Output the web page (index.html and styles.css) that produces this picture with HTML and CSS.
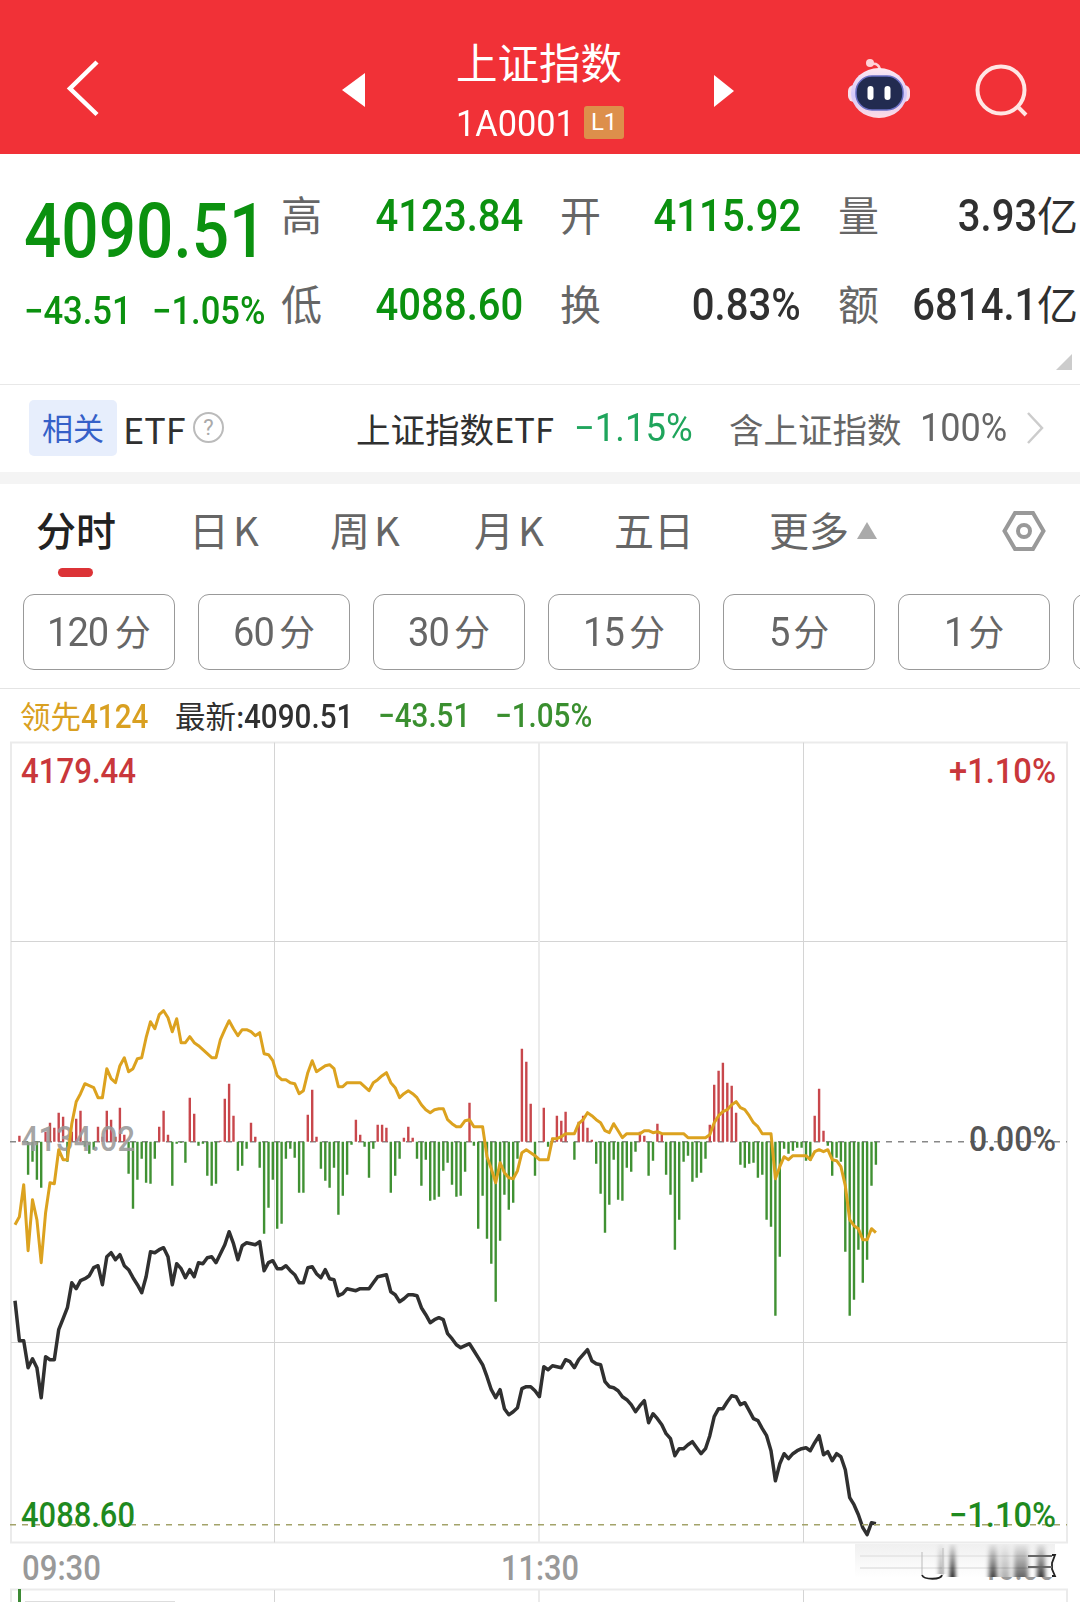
FILE: index.html
```html
<!DOCTYPE html>
<html lang="zh-CN">
<head>
    <meta charset="UTF-8">
    <meta name="viewport" content="width=device-width, initial-scale=1.0">
    <title>上证指数 1A0001</title>
    <link rel="stylesheet" href="styles.css">
</head>
<body>
    <div id="app">
        <header class="topbar">
            <svg class="back" width="34" height="60" viewBox="0 0 34 60"><path d="M31 3 4 29.500l27 26" /></svg>
            <svg class="prev" width="24" height="34" viewBox="0 0 24 34"><path d="M23 0v34L0 17z" /></svg>
            <div class="title">
                <h1>上证指数</h1>
                <p><span class="num code">1A0001</span><span class="level">L1</span></p>
            </div>
            <svg class="next" width="22" height="32" viewBox="0 0 22 32"><path d="M1 0v32l20-16z" /></svg>
            <svg class="robot" width="64" height="62" viewBox="0 0 64 62">
                <defs>
                    <linearGradient id="shell" x1="0" y1="0" x2="0" y2="1">
                        <stop offset="0" stop-color="#ffe9f0" />
                        <stop offset=".55" stop-color="#d5c8fa" />
                        <stop offset="1" stop-color="#ffdce4" />
                    </linearGradient>
                </defs>
                <path d="M33 13c0-6-4-8-8-7" fill="none" stroke="#ffd3d8" stroke-width="2.5" />
                <circle cx="23" cy="5" r="4" fill="#ffd3d8" />
                <rect x="1" y="27" width="62" height="17" rx="6" fill="#f8dfec" />
                <ellipse cx="32" cy="35" rx="28" ry="25" fill="url(#shell)" />
                <rect x="9" y="18" width="47" height="34" rx="16" fill="#222b50" stroke="#6a6fc4" stroke-width="1.5" />
                <rect x="20.500" y="28" width="6" height="14" rx="3" fill="#fff" />
                <rect x="37.500" y="28" width="6" height="14" rx="3" fill="#fff" />
            </svg>
            <svg class="search" width="56" height="56" viewBox="0 0 56 56"><circle cx="26" cy="27" r="23.500" /><path d="m42 43 9 9" /></svg>
        </header>

        <section class="quote">
            <div class="price">
                <div class="num last">4090.51</div>
                <div class="change"><span class="num">−43.51</span><span class="num">−1.05%</span></div>
            </div>
            <dl class="stats">
                <div><dt>高</dt><dd class="down"><span class="num">4123.84</span></dd></div>
                <div><dt>开</dt><dd class="down"><span class="num">4115.92</span></dd></div>
                <div><dt>量</dt><dd><span class="num">3.93</span>亿</dd></div>
                <div><dt>低</dt><dd class="down"><span class="num">4088.60</span></dd></div>
                <div><dt>换</dt><dd><span class="num">0.83%</span></dd></div>
                <div><dt>额</dt><dd><span class="num">6814.1</span>亿</dd></div>
            </dl>
            <svg class="corner" width="16" height="16" viewBox="0 0 16 16"><path d="M16 0v16H0z" /></svg>
        </section>

        <section class="etf">
            <span class="chip">相关</span>
            <span class="etf-label">ETF</span>
            <span class="help">?</span>
            <span class="etf-name">上证指数ETF</span>
            <span class="num etf-change">−1.15%</span>
            <span class="etf-hold">含上证指数</span>
            <span class="num etf-pct">100%</span>
            <svg width="18" height="32" viewBox="0 0 18 32"><path d="m2 1 14 15L2 31" /></svg>
        </section>

        <nav class="tabs">
            <span class="active">分时</span>
            <span>日<b>K</b></span>
            <span>周<b>K</b></span>
            <span>月<b>K</b></span>
            <span>五日</span>
            <span>更多<svg width="20" height="17" viewBox="0 0 20 17"><path d="M10 0l10 17H0z" /></svg></span>
            <svg class="gear" width="44" height="42" viewBox="0 0 44 42"><path d="M13 3h18l10.500 18L31 39H13L2.500 21z" /><circle cx="22" cy="21" r="6" /></svg>
        </nav>

        <div class="periods">
            <button><span class="num">120</span>分</button>
            <button><span class="num">60</span>分</button>
            <button><span class="num">30</span>分</button>
            <button><span class="num">15</span>分</button>
            <button><span class="num">5</span>分</button>
            <button><span class="num">1</span>分</button>
            <button></button>
        </div>

        <div class="legend">
            <span class="lead">领先<span class="num">4124</span></span>
            <span class="latest">最新:<span class="num">4090.51</span></span>
            <span class="num fall">−43.51</span>
            <span class="num fall">−1.05%</span>
        </div>

        <svg id="chart" width="1080" height="862" viewBox="0 0 1080 862">
            <defs>
                <linearGradient id="fade" x1="0" y1="0" x2="0" y2="1">
                    <stop offset="0" stop-color="#000" stop-opacity=".05" />
                    <stop offset="1" stop-color="#000" />
                </linearGradient>
                <linearGradient id="haze" x1="0" y1="0" x2="0" y2="1">
                    <stop offset="0" stop-color="#f0f0f0" />
                    <stop offset="1" stop-color="#fff" />
                </linearGradient>
                <filter id="soft" x="-50%" width="200%"><feGaussianBlur stdDeviation="2 0" /></filter>
            </defs>
            <g class="grid">
                <path class="frame" d="M11 2.500h1056v800H11z" />
                <path d="M274.500 2.500v800M803.500 2.500v800M11 201.500h1056M11 602.500h1056" />
                <path class="frame" d="M539 2.500v800M11 862v-12.500h1056V862M539 850v12" />
                <path d="M274.500 850v12M803.500 850v12" />
                <path class="zero" d="M10 401.700h1057" />
            </g>
            <g id="bars"></g>
            <g class="label">
                <text class="mid" x="21" y="411" textLength="114" lengthAdjust="spacingAndGlyphs">4134.02</text>
            </g>
            <path id="average" />
            <path id="price" />
            <path class="low" d="M10 784.700h1057" />
            <g class="label">
                <text class="up" x="21" y="43" textLength="115" lengthAdjust="spacingAndGlyphs">4179.44</text>
                <text class="up" x="949" y="43" textLength="107" lengthAdjust="spacingAndGlyphs">+1.10%</text>
                <text class="flat" x="969" y="411" textLength="87" lengthAdjust="spacingAndGlyphs">0.00%</text>
                <text class="down" x="21" y="787" textLength="114" lengthAdjust="spacingAndGlyphs">4088.60</text>
                <text class="down" x="949" y="787" textLength="107" lengthAdjust="spacingAndGlyphs">−1.10%</text>
                <text class="time" x="22" y="840" textLength="79" lengthAdjust="spacingAndGlyphs">09:30</text>
                <text class="time" x="501" y="840" textLength="78" lengthAdjust="spacingAndGlyphs">11:30</text>
                <text class="time" x="982" y="840" textLength="73" lengthAdjust="spacingAndGlyphs">15:00</text>
            </g>
            <g class="watermark">
                <rect x="855" y="804" width="200" height="33" fill="url(#haze)" />
                <path d="M860 816h180M860 828h180" stroke="#e8e8e8" stroke-width="2" />
                <g filter="url(#soft)" fill="url(#fade)">
                    <rect x="939" y="804" width="4" height="30" opacity=".45" />
                    <rect x="950" y="804" width="5" height="33" />
                    <rect x="989" y="804" width="8" height="33" opacity=".75" />
                    <rect x="1000" y="804" width="10" height="33" opacity=".3" />
                    <rect x="1014" y="804" width="14" height="33" opacity=".6" />
                    <rect x="1037" y="804" width="8" height="33" opacity=".8" />
                </g>
                <path d="M922 835c2 5 19 5 20 0M1052 815h3l-3 8v6l3 7h-3" fill="none" stroke="#222" stroke-width="1.8" />
                <path d="M1028 816h24M1028 827h24" stroke="#666" stroke-width="2" />
                <path d="M922 812v23M943 808v27" stroke="#bbb" />
            </g>
            <path d="M19.500 849v13" stroke="#3d8a35" stroke-width="3" />
            <path d="M25 861.500h150" stroke="#ddd" />
        </svg>
    </div>
    <script src="chart.js"></script>
</body>
</html>
```
FILE: styles.css
```css
* {
    box-sizing: border-box;
    margin: 0;
    padding: 0;
}
body {
    width: 1080px;
    height: 1602px;
    overflow: hidden;
    background: #fff;
    color: #303030;
    font-family: "Noto Sans CJK SC", sans-serif;
}
svg {
    display: block;
    flex: none;
}
/* narrow figures */
.num {
    display: inline-block;
    font-family: Roboto, "Noto Sans CJK SC", sans-serif;
    font-weight: 500;
    transform: scaleX(.9);
    transform-origin: left;
}

/* header */
.topbar {
    display: flex;
    height: 154px;
    background: #f13137;
    color: #fff;
}
.topbar svg {
    fill: #fff;
}
.topbar .back {
    margin: 59px 0 0 66px;
    fill: none;
    stroke: #fff;
    stroke-width: 4.5;
}
.prev {
    margin: 73px 0 0 242px;
}
.title {
    width: 168px;
    margin: 39px 0 0 90px;
}
.title h1 {
    font-size: 41.5px;
    font-weight: 400;
    line-height: 44px;
    white-space: nowrap;
}
.title p {
    display: flex;
    align-items: center;
    height: 33px;
    margin-top: 23px;
}
.code {
    width: 129px;
    padding-top: 2px;
    font-size: 36.5px;
    font-weight: 400;
    white-space: nowrap;
    transform: scaleX(.94);
}
.level {
    width: 40px;
    height: 33px;
    border-radius: 3px;
    background: #dd8f4b;
    font: 24px/33px Roboto, sans-serif;
    text-align: center;
}
.next {
    margin: 75px 0 0 89px;
}
.robot {
    margin: 58px 0 0 112px;
}
.topbar .search {
    margin: 63px 0 0 64px;
    fill: none;
    stroke: #ffe6e4;
    stroke-width: 4;
}

/* quote */
.quote {
    position: relative;
    display: flex;
    height: 231px;
    padding: 28px 2px 0 24px;
    border-bottom: 1px solid #e8e8e8;
}
.price {
    width: 257px;
    color: #0b910f;
}
.last {
    width: 257px;
    padding-top: 9px;
    font-size: 76px;
    line-height: 80px;
    white-space: nowrap;
    transform: scaleX(.865);
}
.change {
    display: flex;
    margin-top: 16px;
    font-size: 38px;
    line-height: 48px;
    white-space: nowrap;
}
.change .num {
    width: 128px;
    transform: scaleX(.91);
}
.stats {
    display: grid;
    grid-template-columns: 242px 241px 240px;
    grid-auto-rows: 89px;
    column-gap: 37px;
}
.stats div {
    display: flex;
    justify-content: space-between;
    height: 62px;
    line-height: 62px;
}
.stats dt {
    color: #666;
    font-size: 41px;
}
.stats dd {
    font-size: 41px;
}
.stats .num {
    padding-top: 4px;
    font-size: 44px;
    line-height: 58px;
    transform: scaleX(.91);
    transform-origin: right;
}
.down {
    color: #0b910f;
}
.corner {
    position: absolute;
    right: 8px;
    bottom: 14px;
    fill: #ccc;
}

/* related etf */
.etf {
    display: flex;
    align-items: center;
    height: 99px;
    padding: 0 36px 2px 29px;
    border-bottom: 12px solid #f4f4f4;
    font-size: 34.5px;
    white-space: nowrap;
}
.chip {
    width: 88px;
    height: 56px;
    border-radius: 5px;
    background: #e7eefc;
    color: #3560c8;
    font-size: 31px;
    line-height: 54px;
    text-align: center;
}
.etf-label {
    width: 69px;
    padding-left: 6px;
    font-size: 36px;
}
.help {
    width: 31px;
    height: 31px;
    margin-left: 7px;
    border: 2px solid #bbb;
    border-radius: 50%;
    color: #aaa;
    font: 22px/27px Roboto, sans-serif;
    text-align: center;
}
.etf-name {
    width: 218px;
    margin-left: 132px;
}
.etf-change {
    width: 155px;
    color: #1fa55c;
    font-size: 38px;
    font-weight: 400;
    transform: scaleX(.96);
}
.etf-hold {
    width: 191px;
    color: #666;
}
.etf-pct {
    width: 106px;
    color: #666;
    font-size: 38px;
    font-weight: 400;
    transform: scaleX(.95);
}
.etf svg {
    fill: none;
    stroke: #ccc;
    stroke-width: 2.5;
}

/* tabs */
.tabs {
    display: flex;
    height: 110px;
    padding-left: 36px;
    color: #666;
    font-size: 40px;
    line-height: 90px;
    white-space: nowrap;
}
.tabs span {
    position: relative;
    width: 144px;
}
.tabs span:first-child {
    width: 153px;
}
.tabs span:nth-child(2) {
    width: 141px;
}
.tabs span:nth-child(4) {
    width: 140px;
}
.tabs span:nth-child(5) {
    width: 155px;
}
.tabs span:nth-child(6) {
    display: flex;
    width: 233px;
}
.tabs b {
    margin-left: 4px;
    font-weight: 400;
}
.tabs .active {
    color: #222;
    font-weight: 500;
}
.tabs .active::after {
    content: "";
    position: absolute;
    left: 22px;
    top: 84px;
    width: 35px;
    height: 9px;
    border-radius: 5px;
    background: #dc3337;
}
.tabs span svg {
    margin: 38px 0 0 8px;
    fill: #aaa;
}
.gear {
    margin-top: 26px;
    fill: none;
    stroke: #999;
    stroke-width: 4;
}

/* periods */
.periods {
    display: flex;
    gap: 23px;
    height: 95px;
    padding-left: 23px;
    overflow: hidden;
    border-bottom: 1px solid #e4e4e4;
}
.periods button {
    flex: none;
    width: 152px;
    height: 76px;
    padding-bottom: 4px;
    border: 1px solid #999;
    border-radius: 11px;
    background: #fff;
    color: #666;
    font: 36px "Noto Sans CJK SC", sans-serif;
}
.periods .num {
    margin-right: 3px;
    font-size: 40px;
    font-weight: 400;
    letter-spacing: -1px;
    transform: scaleX(.95);
}

/* chart */
.legend {
    display: flex;
    height: 51px;
    padding-left: 20px;
    font-size: 30.5px;
    line-height: 53px;
    white-space: nowrap;
}
.legend .num {
    font-size: 33.5px;
    transform: scaleX(.885);
}
.lead {
    width: 155px;
    color: #d9a021;
}
.latest {
    width: 203px;
}
.legend .fall {
    width: 117px;
    color: #3a8f2f;
}
.grid path {
    fill: none;
    stroke: #d4d4d4;
    stroke-width: 1;
}
.grid .frame {
    stroke: #ebebeb;
    stroke-width: 2;
}
.grid .zero {
    stroke: #888;
    stroke-width: 1.4;
    stroke-dasharray: 6 6;
}
.low {
    stroke: #a3a36a;
    stroke-width: 1.6;
    stroke-dasharray: 6 6;
}
.label text {
    font: 500 34.5px Roboto, sans-serif;
}
.label .up {
    fill: #c9373b;
}
.label .down {
    fill: #1f8a1f;
}
.label .mid {
    fill: #999;
    fill-opacity: .9;
}
.label .flat {
    fill: #555;
}
.label .time {
    fill: #999;
}
#bars path {
    stroke-width: 2.4;
}
#bars .rise {
    stroke: #c8474c;
}
#bars .drop {
    stroke: #409133;
}
#average,
#price {
    fill: none;
    stroke-linejoin: round;
    stroke-width: 3;
}
#average {
    stroke: #dca21f;
}
#price {
    stroke: #303030;
    stroke-width: 3.5;
}
```
FILE: chart.js
```javascript
// one value per minute, offset from the zero line
const bars = [
    0, 6, 0, -33, -20, -38, -46, 10, 19, 14, 29, 25, -20, 10, 23, 31, -5, -12, -8, 15,
    5, 31, 22, 5, 34, 7, -32, -67, -38, -17, -41, -42, -17, 15, 31, 7, -44, -2, -1, -21,
    44, 28, -4, -2, -34, -44, -42, 1, 43, 58, 26, -29, -24, -7, 19, 5, -26, -92, -66, -38,
    -87, -82, -17, -7, -16, -51, -51, 27, 52, 5, -27, -39, -46, -26, -73, -54, -33, -3, 22, 7,
    -5, -36, -7, 17, 17, 14, -51, -34, -17, 4, 15, 4, -17, -44, -18, -59, -58, -55, -29, -21,
    -43, -55, -54, -30, 39, -4, -87, -54, -97, -122, -160, -99, -53, -68, -61, -17, 93, 80, 38, -34,
    0, 34, -5, 4, 26, 21, 30, 0, -18, 20, 26, 14, 2, -22, -52, -91, -63, -18, -58, -59,
    -26, -30, -10, 10, 6, -34, -19, 18, 7, -33, -53, -108, -78, -20, -14, -40, -36, -31, -17, 17,
    57, 71, 79, 59, 56, 29, -23, -26, -22, -21, -36, -33, -78, -85, -174, -115, -7, -12, -9, -6,
    -6, -19, -19, 26, 53, 11, -4, -34, -16, -20, -110, -174, -158, -108, -141, -118, -44, -23
];
const average = [
    -83, -75, -43, -109, -58, -78, -121, -71, -41, -42, -8, -18, -18, 18, 40, 48, 58, 56, 54, 44,
    44, 73, 63, 59, 76, 84, 70, 73, 83, 84, 104, 120, 113, 127, 131, 124, 110, 123, 99, 99,
    105, 99, 96, 92, 88, 84, 84, 102, 112, 121, 113, 106, 112, 112, 110, 106, 109, 88, 87, 81,
    66, 62, 62, 59, 58, 48, 51, 69, 81, 70, 73, 76, 77, 73, 55, 55, 59, 59, 59, 59,
    55, 51, 59, 62, 66, 69, 59, 54, 44, 48, 51, 48, 44, 37, 32, 29, 32, 33, 33, 22,
    18, 15, 15, 21, 22, 15, 15, 15, -15, -27, -41, -21, -31, -36, -37, -29, -11, -8, -11, -14,
    -18, -18, -18, 3, 3, 5, 8, 8, 8, 18, 22, 29, 26, 22, 19, 11, 9, 18, 11, 4,
    8, 8, 8, 8, 11, 11, 9, 10, 8, 8, 8, 8, 8, 8, 4, 4, 4, 4, 4, 7,
    19, 26, 30, 32, 37, 40, 34, 32, 26, 19, 15, 8, 8, 8, -37, -25, -15, -18, -14, -14,
    -14, -14, -18, -10, -8, -10, -8, -18, -19, -25, -44, -78, -84, -87, -98, -98, -87, -91
];
const price = [
    -159, -199, -199, -226, -217, -226, -256, -215, -218, -218, -188, -177, -166, -141, -147, -139, -137, -134, -126, -124,
    -143, -115, -111, -118, -113, -124, -128, -136, -143, -151, -135, -110, -111, -108, -106, -115, -143, -122, -127, -136,
    -128, -135, -121, -122, -116, -115, -121, -112, -103, -90, -102, -118, -104, -101, -102, -103, -100, -129, -121, -119,
    -127, -127, -124, -129, -133, -141, -141, -126, -125, -132, -136, -128, -137, -138, -154, -152, -147, -148, -149, -147,
    -147, -147, -141, -135, -134, -133, -150, -153, -160, -157, -153, -153, -154, -166, -173, -181, -178, -176, -178, -192,
    -197, -203, -206, -204, -202, -209, -216, -223, -235, -248, -256, -248, -267, -273, -270, -266, -247, -245, -245, -249,
    -255, -225, -228, -224, -225, -226, -218, -220, -226, -218, -213, -208, -219, -222, -223, -240, -245, -246, -249, -255,
    -258, -263, -270, -264, -259, -281, -272, -277, -283, -292, -297, -314, -307, -307, -303, -300, -306, -312, -307, -294,
    -275, -267, -267, -260, -254, -255, -263, -261, -269, -277, -279, -287, -294, -309, -339, -322, -312, -317, -312, -309,
    -307, -306, -309, -301, -294, -313, -310, -319, -312, -315, -328, -356, -363, -373, -386, -393, -381, -382
];

const zeroY = 401.7;
const x = i => (15 + i * 4.37).toFixed(1);

function line(values) {
    return 'M' + values.map((v, i) => x(i) + ' ' + (zeroY - v)).join('L');
}

function sticks(test) {
    return bars.map((v, i) => test(v) ? `M${x(i)} ${zeroY}v${-v}` : '').join('');
}

document.getElementById('bars').innerHTML =
    `<path class="rise" d="${sticks(v => v > 0)}"/><path class="drop" d="${sticks(v => v < 0)}"/>`;
document.getElementById('average').setAttribute('d', line(average));
document.getElementById('price').setAttribute('d', line(price));
```
